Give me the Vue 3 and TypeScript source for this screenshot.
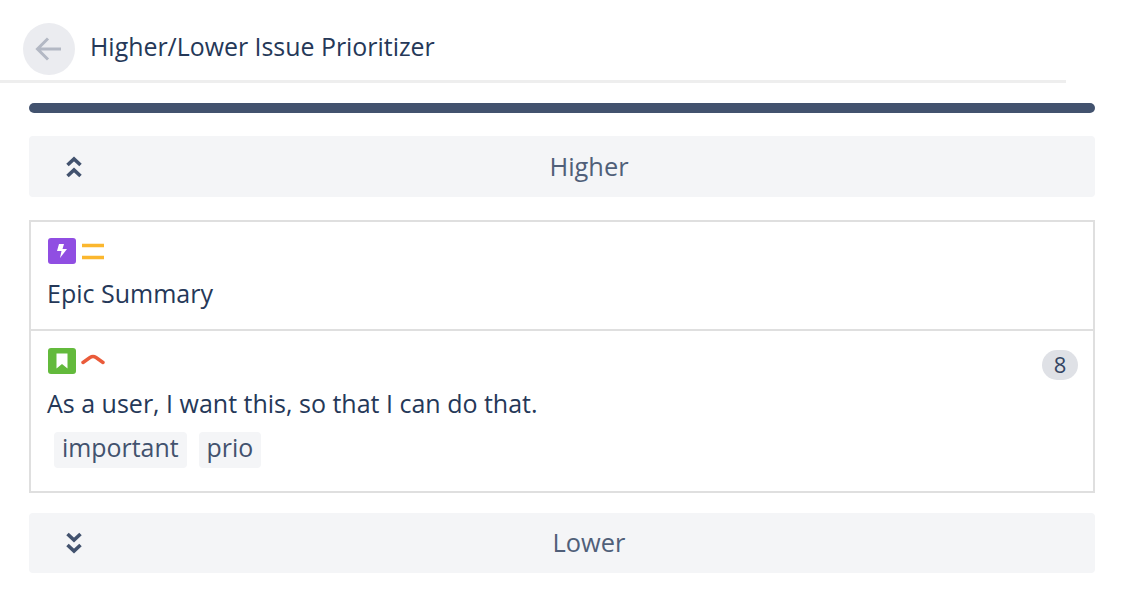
<script setup lang="ts">
interface Issue {
  summary: string;
  type: "epic" | "story";
  priority: "medium" | "high";
  points?: number;
  labels: string[];
}

const issues: Issue[] = [
  { summary: "Epic Summary", type: "epic", priority: "medium", labels: [] },
  {
    summary: "As a user, I want this, so that I can do that.",
    type: "story",
    priority: "high",
    points: 8,
    labels: ["important", "prio"],
  },
];
</script>

<template>
  <div class="page">
    <header class="header">
      <button class="back" type="button">
        <svg width="30" height="30" viewBox="0 0 30 30" fill="none">
          <path d="M27 15H4M14 4.5L3.5 15 14 25.5" stroke="#b3b8c4" stroke-width="3" />
        </svg>
      </button>
      <span class="title">Higher/Lower Issue Prioritizer</span>
    </header>

    <main class="content">
      <div class="progress"></div>

      <button class="choice" type="button">
        <svg class="chevrons" width="16" height="22" viewBox="0 0 16 22" fill="none">
          <path d="M1.5 9L8 3l6.5 6M1.5 20L8 14l6.5 6" stroke="#42526e" stroke-width="3.6" />
        </svg>
        <span class="choice-label">Higher</span>
      </button>

      <ul class="issues">
        <li v-for="issue in issues" :key="issue.summary" class="issue">
          <div class="issue-main">
            <div class="icons">
              <svg v-if="issue.type === 'epic'" width="28" height="26" viewBox="0 0 28 26">
                <rect width="28" height="26" rx="3" fill="#904ee2" />
                <path d="M11 6h5l-1.5 5H19l-7 9 1.5-7H9z" fill="#fff" />
              </svg>
              <svg v-else width="28" height="26" viewBox="0 0 28 26">
                <rect width="28" height="26" rx="3" fill="#63ba3c" />
                <path d="M8.5 5.5h11v15L14 16l-5.5 4.5z" fill="#fff" />
              </svg>
              <svg v-if="issue.priority === 'medium'" width="24" height="26" viewBox="0 0 24 26" fill="none">
                <path d="M1 7.5h22M1 19.5h22" stroke="#fbb72e" stroke-width="3.6" />
              </svg>
              <svg v-else width="24" height="26" viewBox="0 0 24 26" fill="none">
                <path d="M2 14.5L9 9.5Q12 7.5 15 9.5L22 14.5" stroke="#ea5b3a" stroke-width="3.4" stroke-linecap="round" />
              </svg>
            </div>
            <div class="summary">{{ issue.summary }}</div>
            <div v-if="issue.labels.length" class="labels">
              <span v-for="label in issue.labels" :key="label" class="label">{{ label }}</span>
            </div>
          </div>
          <span v-if="issue.points" class="points">{{ issue.points }}</span>
        </li>
      </ul>

      <button class="choice lower" type="button">
        <svg class="chevrons" width="16" height="22" viewBox="0 0 16 22" fill="none">
          <path d="M1.5 2l6.5 6 6.5-6M1.5 13l6.5 6 6.5-6" stroke="#42526e" stroke-width="3.6" />
        </svg>
        <span class="choice-label">Lower</span>
      </button>
    </main>
  </div>
</template>

<style scoped>
.page {
  width: 1124px;
  height: 600px;
  box-sizing: border-box;
  padding-top: 23px;
  font-family: "Open Sans", "Noto Sans", sans-serif;
  color: #172b4d;
  background: #fff;
  overflow: hidden;
}

.header {
  width: 1066px;
  height: 60px;
  box-sizing: border-box;
  display: flex;
  align-items: flex-start;
  gap: 15px;
  padding-left: 23px;
  border-bottom: 3px solid #eeeeee;
}

.back {
  width: 52px;
  height: 52px;
  padding: 0;
  border: none;
  border-radius: 50%;
  background: #ebecf0;
  display: flex;
  align-items: center;
  justify-content: center;
}

.title {
  font-size: 24.9px;
  line-height: 47px;
  color: #253858;
}

.content {
  width: 1066px;
  margin-left: 29px;
  padding-top: 20px;
}

.progress {
  height: 10px;
  border-radius: 5px;
  background: #42526e;
}

.choice {
  position: relative;
  width: 100%;
  height: 61px;
  margin-top: 23px;
  padding: 0;
  border: none;
  border-radius: 4px;
  background: #f4f5f7;
  font: inherit;
  display: flex;
  align-items: center;
  justify-content: center;
}

.lower {
  height: 60px;
  margin-top: 20px;
}

.chevrons {
  position: absolute;
  left: 37px;
  top: 50%;
  transform: translateY(-50%);
}

.choice-label {
  font-size: 25.4px;
  font-weight: 500;
  color: #505f79;
  margin-left: 54px;
  padding-bottom: 2px;
}

.issues {
  list-style: none;
  margin: 23px 0 0;
  padding: 0;
  border: 2px solid #dfdfdf;
}

.issue {
  display: flex;
  justify-content: space-between;
  padding: 16px 15px 0 17px;
  height: 107px;
  box-sizing: border-box;
}

.issue + .issue {
  height: 162px;
  padding-top: 17px;
  border-top: 2px solid #dfdfdf;
}

.icons {
  display: flex;
  gap: 5px;
  height: 26px;
}

.summary {
  margin: 12px 0 0 -1px;
  font-size: 25px;
  line-height: 35px;
  color: #253858;
}

.labels {
  display: flex;
  gap: 12px;
  margin: 11px 0 0 6px;
}

.label {
  height: 36px;
  padding: 0 8px;
  border-radius: 4px;
  background: #f4f5f7;
  font-size: 24.9px;
  line-height: 30px;
  color: #42526e;
}

.points {
  width: 36px;
  height: 30px;
  margin-top: 2px;
  border-radius: 15px;
  background: #dfe1e6;
  font-size: 22px;
  line-height: 28px;
  text-align: center;
  color: #344563;
}
</style>
